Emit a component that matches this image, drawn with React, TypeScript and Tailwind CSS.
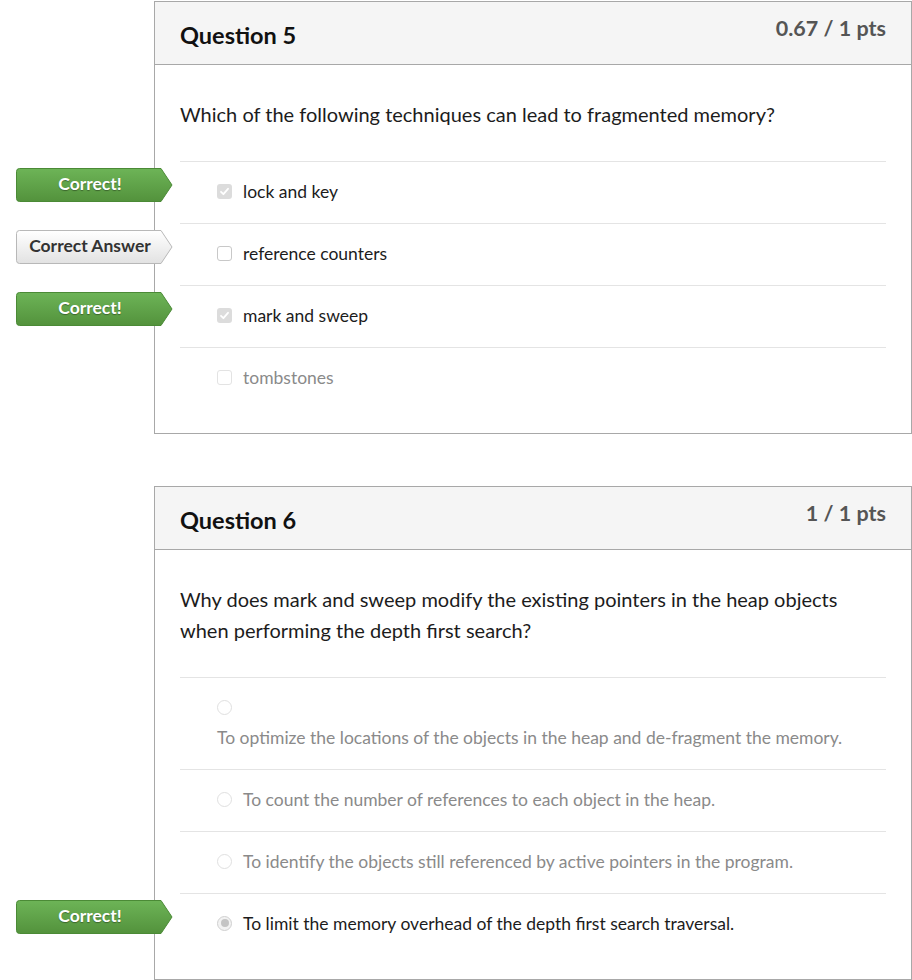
import React from "react";

type Opt = {
  text: string;
  kind: "check" | "radio";
  checked?: boolean;
  faded?: boolean;
  wrap?: boolean;
  badge?: "correct" | "answer";
};

function Badge({ type }: { type: "correct" | "answer" }) {
  const green = type === "correct";
  return (
    <div className="absolute left-[-164px] top-[6px] w-[157px] h-[34px]">
      <svg width="157" height="34" viewBox="0 0 157 34" className="absolute inset-0">
        <defs>
          <linearGradient id="gG" x1="0" y1="0" x2="0" y2="1">
            <stop offset="0" stopColor="#6db457" />
            <stop offset="1" stopColor="#53923c" />
          </linearGradient>
          <linearGradient id="gW" x1="0" y1="0" x2="0" y2="1">
            <stop offset="0" stopColor="#ffffff" />
            <stop offset="1" stopColor="#e2e2e2" />
          </linearGradient>
        </defs>
        <path
          d="M3.5 0.5 H145 L156 17 L145 33.5 H3.5 Q0.5 33.5 0.5 30.5 V3.5 Q0.5 0.5 3.5 0.5 Z"
          fill={green ? "url(#gG)" : "url(#gW)"}
          stroke={green ? "#4b8a36" : "#b8b8b8"}
          strokeWidth="1"
        />
      </svg>
      <div
        className={
          "relative flex h-full w-[148px] items-center justify-center pb-[2px] text-[17.5px] font-bold " +
          (green ? "text-white [text-shadow:0_1px_1px_rgba(0,0,0,0.35)]" : "text-[#333]")
        }
      >
        {green ? "Correct!" : "Correct Answer"}
      </div>
    </div>
  );
}

function Control({ o }: { o: Opt }) {
  if (o.kind === "check") {
    if (o.checked) {
      return (
        <span className="inline-flex h-[15px] w-[15px] items-center justify-center rounded-[3px] bg-[#dcdcdc]">
          <svg width="11" height="11" viewBox="0 0 11 11">
            <path d="M2 5.8 L4.4 8.2 L9 2.8" fill="none" stroke="#fff" strokeWidth="1.8" strokeLinecap="round" strokeLinejoin="round" />
          </svg>
        </span>
      );
    }
    return (
      <span
        className={
          "inline-block h-[15px] w-[15px] rounded-[3px] border bg-white " +
          (o.faded ? "border-[#e3e3e3]" : "border-[#c8c8c8]")
        }
      />
    );
  }
  if (o.checked) {
    return (
      <span className="inline-flex h-[15px] w-[15px] items-center justify-center rounded-full border border-[#d0d0d0] bg-[#f2f2f2]">
        <span className="h-[8px] w-[8px] rounded-full bg-[#c4c4c4]" />
      </span>
    );
  }
  return <span className="inline-block h-[15px] w-[15px] rounded-full border border-[#e0e0e0] bg-white" />;
}

function Row({ o }: { o: Opt }) {
  const textCls = o.faded ? "text-[#8a8a8a]" : "text-[#1c1c1c]";
  return (
    <div className="relative border-t border-[#e4e4e4]">
      {o.badge && <Badge type={o.badge} />}
      {o.wrap ? (
        <div className="pl-[37px] pt-[17px] pb-[19px]">
          <div className="flex h-[24px] items-center">
            <Control o={o} />
          </div>
          <div className={"mt-[7px] h-[24px] leading-[24px] text-[17.5px] " + textCls}>{o.text}</div>
        </div>
      ) : (
        <div className="flex h-[61px] items-start pl-[37px] pt-[17px]">
          <div className="flex h-[24px] items-center">
            <Control o={o} />
          </div>
          <div className={"ml-[11px] mt-[1px] leading-[24px] text-[17.5px] " + textCls}>{o.text}</div>
        </div>
      )}
    </div>
  );
}

function Card({
  title,
  pts,
  question,
  options,
  className,
}: {
  title: string;
  pts: string;
  question: React.ReactNode;
  options: Opt[];
  className?: string;
}) {
  return (
    <div className={"border border-[#a8a8a8] bg-white " + (className ?? "")}>
      <div className="flex h-[63px] items-start justify-between border-b border-[#a8a8a8] bg-[#f5f5f5] px-[25px]">
        <div className="mt-[19px] text-[23.5px] font-bold leading-[28px] text-[#111]">{title}</div>
        <div className="mt-[12px] text-[21.5px] font-bold leading-[28px] text-[#555]">{pts}</div>
      </div>
      <div className="px-[25px] pb-[24px] pt-[34px]">
        <div className="mb-[31px] text-[20px] leading-[31px] text-[#1c1c1c]">{question}</div>
        {options.map((o, i) => (
          <Row key={i} o={o} />
        ))}
      </div>
    </div>
  );
}

export default function App() {
  return (
    <div className="min-h-[980px] bg-white pt-px pl-[154px] font-['Lato','Open_Sans',sans-serif]">
      <Card
        title="Question 5"
        pts="0.67 / 1 pts"
        question="Which of the following techniques can lead to fragmented memory?"
        options={[
          { text: "lock and key", kind: "check", checked: true, badge: "correct" },
          { text: "reference counters", kind: "check", badge: "answer" },
          { text: "mark and sweep", kind: "check", checked: true, badge: "correct" },
          { text: "tombstones", kind: "check", faded: true },
        ]}
      />
      <Card
        className="mt-[52px]"
        title="Question 6"
        pts="1 / 1 pts"
        question={
          <>
            Why does mark and sweep modify the existing pointers in the heap objects
            <br />
            when performing the depth first search?
          </>
        }
        options={[
          {
            text: "To optimize the locations of the objects in the heap and de-fragment the memory.",
            kind: "radio",
            faded: true,
            wrap: true,
          },
          { text: "To count the number of references to each object in the heap.", kind: "radio", faded: true },
          {
            text: "To identify the objects still referenced by active pointers in the program.",
            kind: "radio",
            faded: true,
          },
          {
            text: "To limit the memory overhead of the depth first search traversal.",
            kind: "radio",
            checked: true,
            badge: "correct",
          },
        ]}
      />
    </div>
  );
}
